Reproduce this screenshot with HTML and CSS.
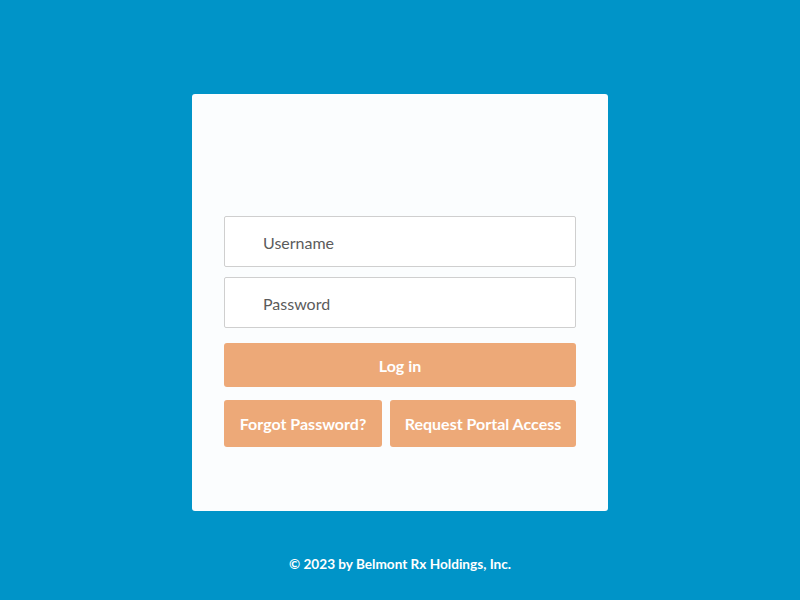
FILE: index.html
```html
<!DOCTYPE html>
<html>
<head>
<meta charset="utf-8">
<link rel="stylesheet" href="styles.css">
</head>
<body>
<div class="page">
  <div class="card">
    <div class="logo-space"></div>
    <form class="form">
      <input class="field" type="text" placeholder="Username">
      <input class="field" type="password" placeholder="Password">
      <button class="btn btn-login" type="button">Log in</button>
      <div class="row">
        <button class="btn btn-small btn-forgot" type="button">Forgot Password?</button>
        <button class="btn btn-small btn-request" type="button">Request Portal Access</button>
      </div>
    </form>
  </div>
  <div class="footer">© 2023 by Belmont Rx Holdings, Inc.</div>
</div>
</body>
</html>
```
FILE: styles.css
```css
html, body {
  margin: 0;
  padding: 0;
  background: #0094c8;
  font-family: Lato, "Open Sans", sans-serif;
}
.page {
  display: flex;
  flex-direction: column;
  align-items: center;
  padding-top: 94px;
  min-height: 506px;
}
.card {
  box-sizing: border-box;
  width: 416px;
  height: 417px;
  background: #fbfdfe;
  border-radius: 3px;
  padding: 0 32px;
}
.logo-space {
  height: 122px;
}
.form {
  display: flex;
  flex-direction: column;
}
.field {
  box-sizing: border-box;
  height: 51px;
  border: 1px solid #cfcfcf;
  border-radius: 2px;
  background: #ffffff;
  padding: 1px 38px 0;
  font-family: Lato, sans-serif;
  font-size: 16px;
  color: #555;
  margin-bottom: 10px;
  outline: none;
}
.field::placeholder {
  color: #5b5b5b;
}
.btn {
  border: none;
  border-radius: 3px;
  background: #eda978;
  color: #ffffff;
  font-family: Lato, sans-serif;
  font-weight: bold;
  font-size: 16px;
  cursor: pointer;
}
.btn-login {
  height: 44px;
  margin-top: 5px;
}
.row {
  display: flex;
  gap: 8px;
  margin-top: 13px;
}
.btn-small {
  height: 47px;
  padding: 0 12px;
}
.btn-forgot {
  flex: 0 0 158px;
}
.btn-request {
  flex: 1 1 auto;
}
.footer {
  margin-top: 45px;
  color: #ffffff;
  font-size: 13.6px;
  font-weight: bold;
}
```
